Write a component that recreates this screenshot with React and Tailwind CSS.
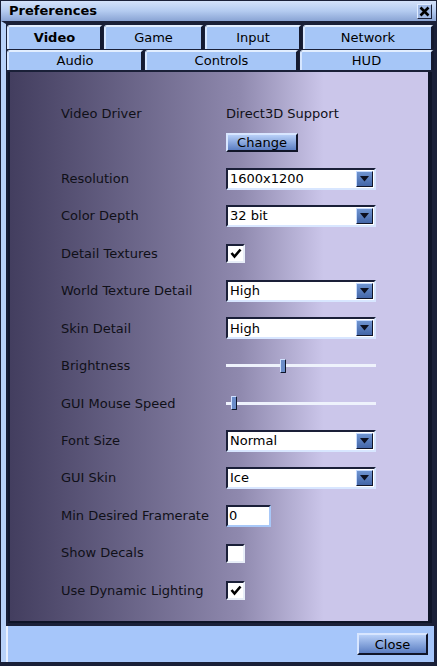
import { useState } from 'react'

const FONT = { fontFamily: '"DejaVu Sans", Verdana, sans-serif' }

const Tab = ({ label, active, className = '' }) => (
  <div
    className={`flex items-center justify-center rounded-t-[3px] border-t-2 border-l-2 border-r-[3px] border-t-[#e2eeff] border-l-[#d6e6ff] border-r-[#141a30] bg-[#a6c6f7] text-[13px] text-black ${
      active ? 'font-bold' : ''
    } ${className}`}
  >
    {label}
  </div>
)

const Dropdown = ({ value }) => (
  <div className="flex h-[22px] w-[150px] items-stretch border-2 border-t-[#1a1f38] border-l-[#1a1f38] border-r-[#d8e6ff] border-b-[#d8e6ff] bg-white">
    <div className="flex flex-1 items-center pl-[2px] text-[13px] text-black">{value}</div>
    <div className="m-[1px] flex w-[17px] items-center justify-center border border-t-[#c8dcff] border-l-[#c8dcff] border-r-[#101528] border-b-[#101528] bg-gradient-to-b from-[#6f94d0] to-[#4366a8]">
      <svg width="9" height="6" viewBox="0 0 9 6">
        <path d="M0 0h9L4.5 5.5z" fill="#0c1020" />
      </svg>
    </div>
  </div>
)

const Checkbox = ({ checked }) => (
  <div className="flex h-[19px] w-[19px] items-center justify-center border-2 border-t-[#1a1f38] border-l-[#1a1f38] border-r-[#e8eef8] border-b-[#e8eef8] bg-white">
    {checked && (
      <svg width="12" height="11" viewBox="0 0 12 11">
        <path d="M1.5 5l3 3.5 6-7" stroke="#000" strokeWidth="2.6" fill="none" />
      </svg>
    )}
  </div>
)

const Slider = ({ pos }) => (
  <div className="relative flex h-[16px] w-[150px] items-center">
    <div className="h-[3px] w-full bg-[#eef2fc]" />
    <div
      className="absolute top-[1px] h-[14px] w-[6px] rounded-[1px] border border-t-[#d0e0ff] border-l-[#d0e0ff] border-r-[#0e1428] border-b-[#0e1428] bg-[#6a8cc8]"
      style={{ left: pos }}
    />
  </div>
)

const Row = ({ label, children }) => (
  <div className="flex h-[37.45px] items-center">
    <div className="w-[165px] text-[13px] text-[#101018]">{label}</div>
    <div className="flex items-center">{children}</div>
  </div>
)

export default function App() {
  const [rows] = useState([
    { label: 'Resolution', el: <Dropdown value="1600x1200" /> },
    { label: 'Color Depth', el: <Dropdown value="32 bit" /> },
    { label: 'Detail Textures', el: <Checkbox checked /> },
    { label: 'World Texture Detail', el: <Dropdown value="High" /> },
    { label: 'Skin Detail', el: <Dropdown value="High" /> },
    { label: 'Brightness', el: <Slider pos={54} /> },
    { label: 'GUI Mouse Speed', el: <Slider pos={5} /> },
    { label: 'Font Size', el: <Dropdown value="Normal" /> },
    { label: 'GUI Skin', el: <Dropdown value="Ice" /> },
    {
      label: 'Min Desired Framerate',
      el: (
        <div className="flex h-[22px] w-[45px] items-center border-2 border-t-[#1a1f38] border-l-[#1a1f38] border-r-[#a8c8f8] border-b-[#a8c8f8] bg-white pl-[1px] text-[13px] text-black">
          0
        </div>
      ),
    },
    { label: 'Show Decals', el: <Checkbox /> },
    { label: 'Use Dynamic Lighting', el: <Checkbox checked /> },
  ])

  return (
    <div style={FONT} className="flex h-[666px] w-[437px] flex-col bg-[#1a2038] p-[1px] pb-[4px]">
      {/* title bar */}
      <div className="flex h-[20px] shrink-0 items-center justify-between bg-gradient-to-b from-[#d4e2fa] via-[#b4cbf0] to-[#8aa4d4] pl-[8px] pr-[4px]">
        <span className="text-[13px] font-bold text-black">Preferences</span>
        <div className="flex h-[15px] w-[15px] items-center justify-center border border-t-[#e0ecff] border-l-[#e0ecff] border-r-[#1a2038] border-b-[#1a2038] bg-[#9fb8e4]">
          <svg width="11" height="11" viewBox="0 0 11 11">
            <path d="M1.5 1.5l8 8M9.5 1.5l-8 8" stroke="#000" strokeWidth="2.6" />
          </svg>
        </div>
      </div>

      {/* body */}
      <div className="flex flex-1 flex-col border-l-[5px] border-r-[2px] border-t-[3px] border-l-[#b8d2fa] border-r-[#1a2038] border-t-[#1a2038] bg-[#1a2038]">
        {/* tabs */}
        <div className="flex h-[25px] shrink-0 gap-[1px] pl-[1px] pt-[1px]">
          <Tab label="Video" active className="w-[96px]" />
          <Tab label="Game" className="w-[100px]" />
          <Tab label="Input" className="w-[97px]" />
          <Tab label="Network" className="flex-1" />
        </div>
        <div className="flex h-[21px] shrink-0 gap-[1px] pl-[1px] pt-[1px]">
          <Tab label="Audio" className="w-[137px]" />
          <Tab label="Controls" className="w-[154px]" />
          <Tab label="HUD" className="flex-1" />
        </div>

        {/* content */}
        <div className="mx-[2px] mt-[2px] flex flex-1 flex-col border-l-2 border-r-[4px] border-b-[2px] border-l-[#121830] border-r-[#0e1428] border-b-[#0e1428] bg-gradient-to-r from-[#433e5f] via-[#8f89ae] via-55% to-[#cbc6ea] to-75% pl-[51px] pt-[32px]">
          <div className="flex h-[56px] items-start">
            <div className="w-[165px] text-[13px] text-[#101018]">Video Driver</div>
            <div className="flex flex-col items-start">
              <div className="text-[13px] text-[#101018]">Direct3D Support</div>
              <button className="mt-[9px] h-[19px] w-[72px] border-2 border-t-[#d8e6ff] border-l-[#d8e6ff] border-r-[#101528] border-b-[#101528] bg-gradient-to-b from-[#b8d0f8] to-[#5c7ec2] text-[13px] leading-none text-black">
                Change
              </button>
            </div>
          </div>
          {rows.map((r) => (
            <Row key={r.label} label={r.label}>
              {r.el}
            </Row>
          ))}
        </div>

        {/* footer */}
        <div className="mt-[3px] flex h-[36px] shrink-0 items-center justify-end border-l-2 border-l-[#e8f0ff] bg-[#a6c6fa] pr-[6px]">
          <button className="h-[22px] w-[71px] border-2 border-t-[#d8e6ff] border-l-[#d8e6ff] border-r-[#101528] border-b-[#101528] bg-gradient-to-b from-[#b8d0f8] to-[#5c7ec2] text-[13px] leading-none text-black">
            Close
          </button>
        </div>
      </div>
    </div>
  )
}
